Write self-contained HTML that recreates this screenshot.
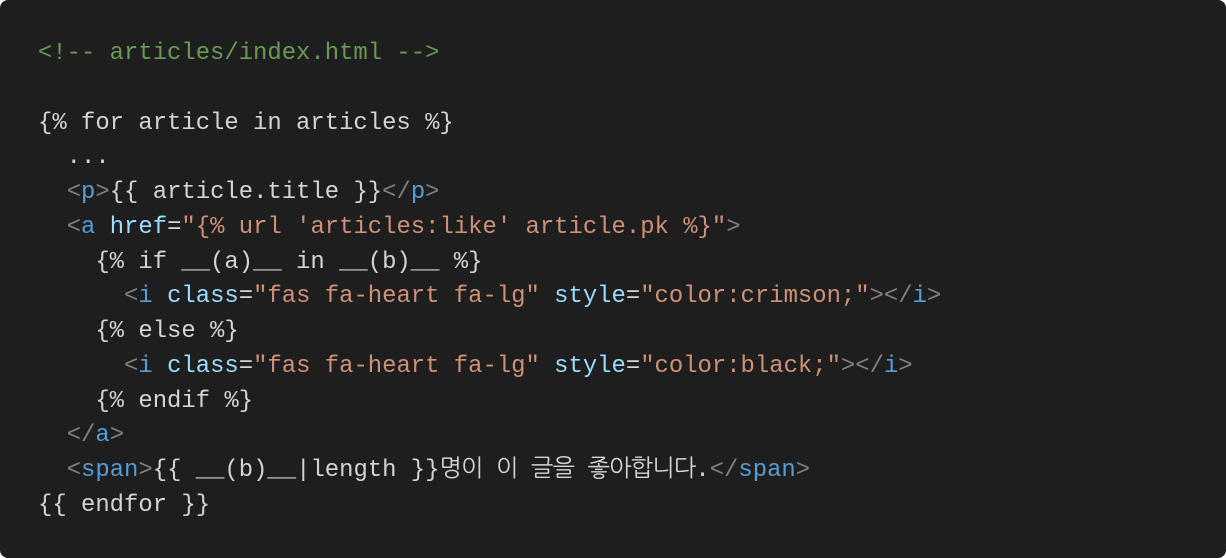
<!DOCTYPE html>
<html><head><meta charset="utf-8"><style>
html,body{margin:0;padding:0;background:#fff;width:1226px;height:558px;overflow:hidden}
.box{position:absolute;left:0;top:0;width:1226px;height:558px;background:#1e1e1e;border-radius:8px}
pre{margin:0;position:absolute;left:38px;top:37px;font-family:"Liberation Mono","NanumGothic","Noto Sans CJK KR",monospace;font-size:23.9px;line-height:34.75px;color:#d4d4d4}
.c{color:#6a9955}.p{color:#808080}.t{color:#569cd6}.a{color:#9cdcfe}.s{color:#ce9178}
.k{letter-spacing:-0.9px}
</style></head><body><div class="box"><pre><span class="c">&lt;!-- articles/index.html --&gt;</span>

{% for article in articles %}
  ...
  <span class="p">&lt;</span><span class="t">p</span><span class="p">&gt;</span>{{ article.title }}<span class="p">&lt;/</span><span class="t">p</span><span class="p">&gt;</span>
  <span class="p">&lt;</span><span class="t">a</span> <span class="a">href</span>=<span class="s">"{% url 'articles:like' article.pk %}"</span><span class="p">&gt;</span>
    {% if __(a)__ in __(b)__ %}
      <span class="p">&lt;</span><span class="t">i</span> <span class="a">class</span>=<span class="s">"fas fa-heart fa-lg"</span> <span class="a">style</span>=<span class="s">"color:crimson;"</span><span class="p">&gt;&lt;/</span><span class="t">i</span><span class="p">&gt;</span>
    {% else %}
      <span class="p">&lt;</span><span class="t">i</span> <span class="a">class</span>=<span class="s">"fas fa-heart fa-lg"</span> <span class="a">style</span>=<span class="s">"color:black;"</span><span class="p">&gt;&lt;/</span><span class="t">i</span><span class="p">&gt;</span>
    {% endif %}
  <span class="p">&lt;/</span><span class="t">a</span><span class="p">&gt;</span>
  <span class="p">&lt;</span><span class="t">span</span><span class="p">&gt;</span>{{ __(b)__|length }}<span class="k">명이 이 글을 좋아합니다</span>.<span class="p">&lt;/</span><span class="t">span</span><span class="p">&gt;</span>
{{ endfor }}</pre></div></body></html>
